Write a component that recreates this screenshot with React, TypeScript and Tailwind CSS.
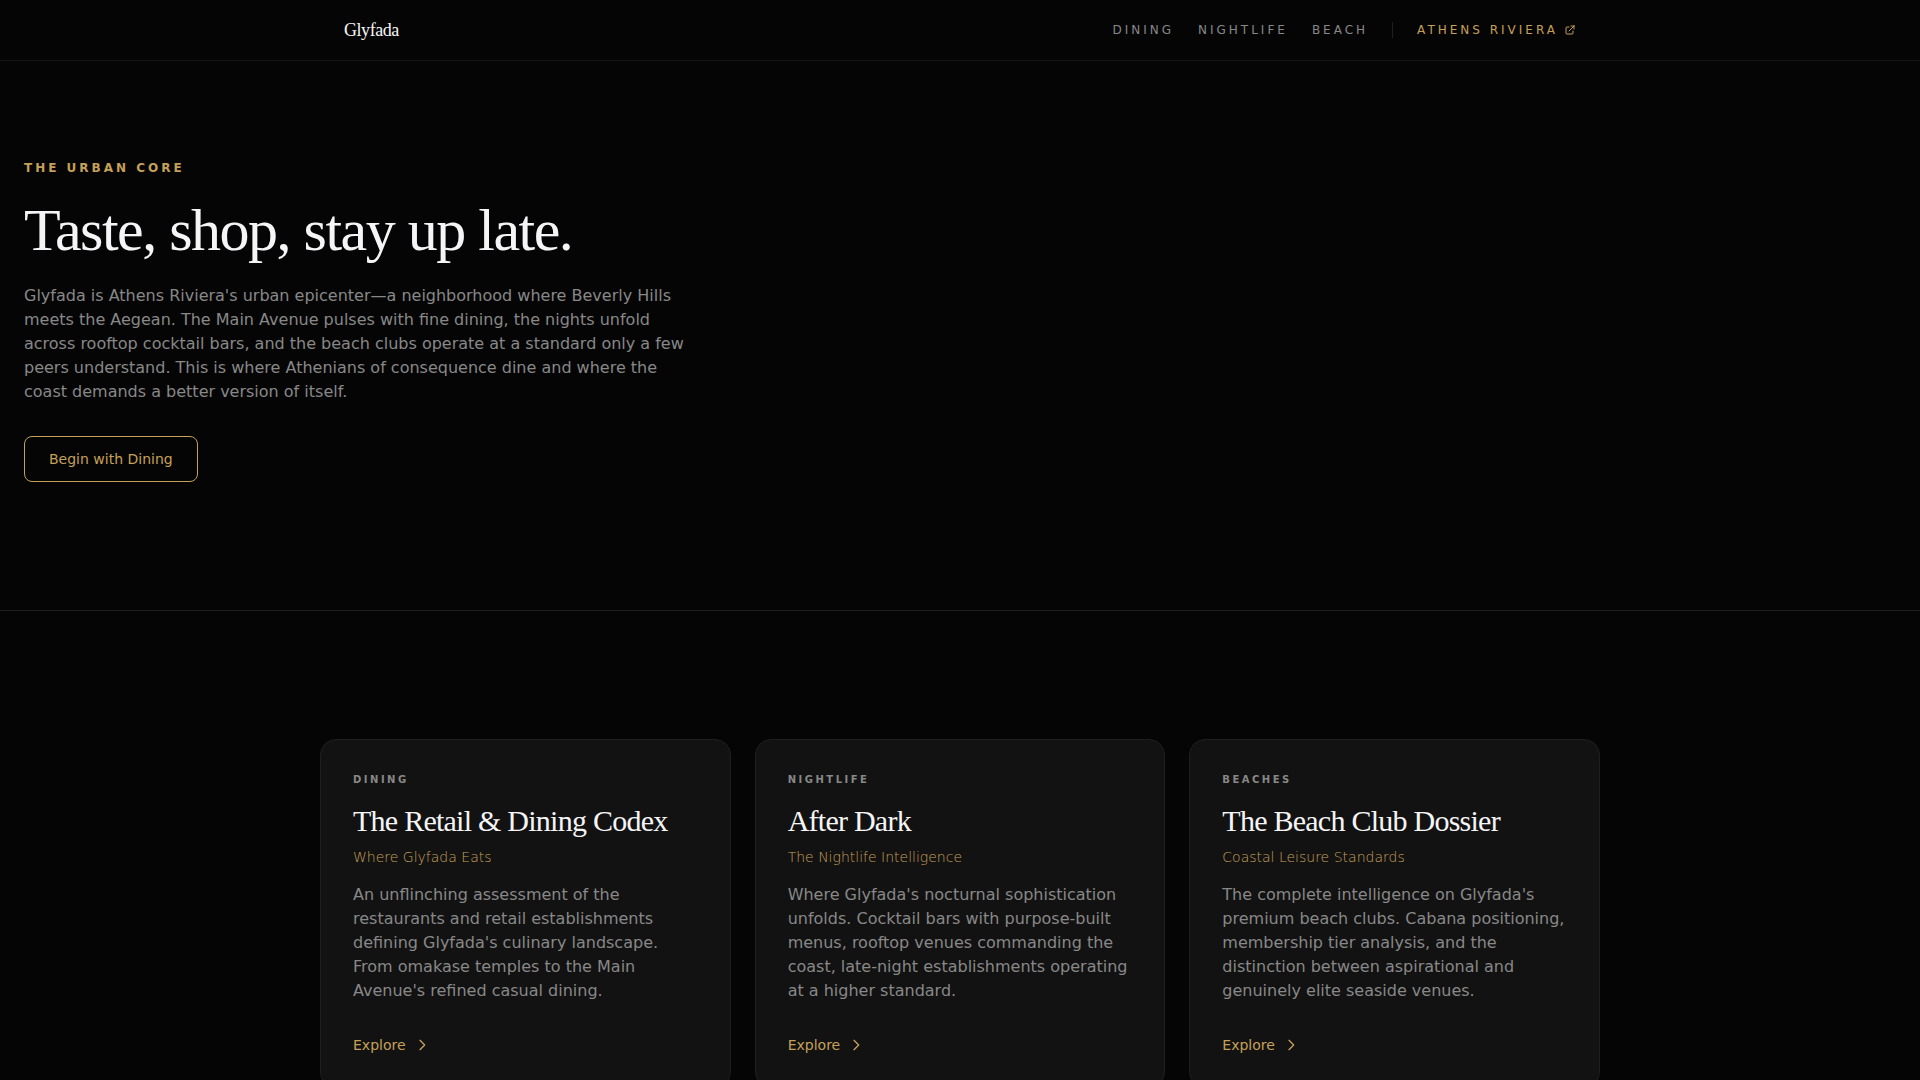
const SANS = "font-['DejaVu_Sans',sans-serif]";
const navLinks = ['Dining', 'Nightlife', 'Beach'];
const cards = [
  {
    tag: 'Dining',
    title: 'The Retail & Dining Codex',
    subtitle: 'Where Glyfada Eats',
    text: "An unflinching assessment of the restaurants and retail establishments defining Glyfada's culinary landscape. From omakase temples to the Main Avenue's refined casual dining.",
  },
  {
    tag: 'Nightlife',
    title: 'After Dark',
    subtitle: 'The Nightlife Intelligence',
    text: "Where Glyfada's nocturnal sophistication unfolds. Cocktail bars with purpose-built menus, rooftop venues commanding the coast, late-night establishments operating at a higher standard.",
  },
  {
    tag: 'Beaches',
    title: 'The Beach Club Dossier',
    subtitle: 'Coastal Leisure Standards',
    text: "The complete intelligence on Glyfada's premium beach clubs. Cabana positioning, membership tier analysis, and the distinction between aspirational and genuinely elite seaside venues.",
  },
];

function Chevron() {
  return (
    <svg className="size-4" viewBox="0 0 24 24" fill="none" stroke="currentColor" strokeWidth={2} strokeLinecap="round" strokeLinejoin="round" aria-hidden="true">
      <path d="M9 5l7 7-7 7" />
    </svg>
  );
}

function External() {
  return (
    <svg className="size-3" viewBox="0 0 24 24" fill="none" stroke="currentColor" strokeWidth={2} strokeLinecap="round" strokeLinejoin="round" aria-hidden="true">
      <path d="M10 6H6a2 2 0 00-2 2v10a2 2 0 002 2h10a2 2 0 002-2v-4M14 4h6m0 0v6m0-6L10 14" />
    </svg>
  );
}

export default function App() {
  return (
    <div className={`min-h-screen bg-[#050505] text-[#f5f5f7] ${SANS}`}>
      <header className="border-b border-[#141414]">
        <div className="mx-auto flex h-15 max-w-7xl items-center justify-between px-6">
          <a href="#" className="font-['Liberation_Serif',serif] text-lg tracking-tight">Glyfada</a>
          <nav className="flex items-center gap-6 text-xs uppercase tracking-[0.25em] text-[#888888]">
            {navLinks.map((label) => (
              <a key={label} href="#">{label}</a>
            ))}
            <span className="h-4 w-px bg-[#1f1f1f]" />
            <a href="#" className="flex items-center gap-1.5 text-[#c5a059]">
              Athens Riviera <External />
            </a>
          </nav>
        </div>
      </header>
      <main>
        <section className="border-b border-[#1f1f1f] px-6 pt-24 pb-32">
          <p className="mb-5 text-xs font-bold uppercase leading-[23px] tracking-[0.25em] text-[#c5a059]">The Urban Core</p>
          <h1 className="mb-6 font-['Liberation_Serif',serif] text-6xl leading-none tracking-tight">Taste, shop, stay up late.</h1>
          <p className="mb-8 max-w-2xl text-base text-[#888888]">
            Glyfada is Athens Riviera's urban epicenter—a neighborhood where Beverly Hills meets the Aegean. The Main Avenue pulses with fine dining, the nights unfold across rooftop cocktail bars, and the beach clubs operate at a standard only a few peers understand. This is where Athenians of consequence dine and where the coast demands a better version of itself.
          </p>
          <a href="#" className="inline-flex rounded-lg border border-[#c5a059] px-6 py-3 text-sm text-[#c5a059]">Begin with Dining</a>
        </section>
        <section className="mx-auto grid max-w-7xl gap-6 py-32 md:grid-cols-3">
          {cards.map((card) => (
            <article key={card.tag} className="rounded-2xl border border-[#1f1f1f] bg-[#121212] p-8">
              <p className="mb-4 text-[10px] font-bold uppercase leading-[15px] tracking-[0.25em] text-[#888888]">{card.tag}</p>
              <h2 className="mb-2 font-['Liberation_Serif',serif] text-3xl tracking-tight">{card.title}</h2>
              <p className="mb-4 text-sm font-extralight text-[#c5a059]">{card.subtitle}</p>
              <p className="mb-8 text-base text-[#888888]">{card.text}</p>
              <a href="#" className="flex items-center gap-2 text-sm text-[#c5a059]">
                Explore <Chevron />
              </a>
            </article>
          ))}
        </section>
      </main>
    </div>
  );
}
